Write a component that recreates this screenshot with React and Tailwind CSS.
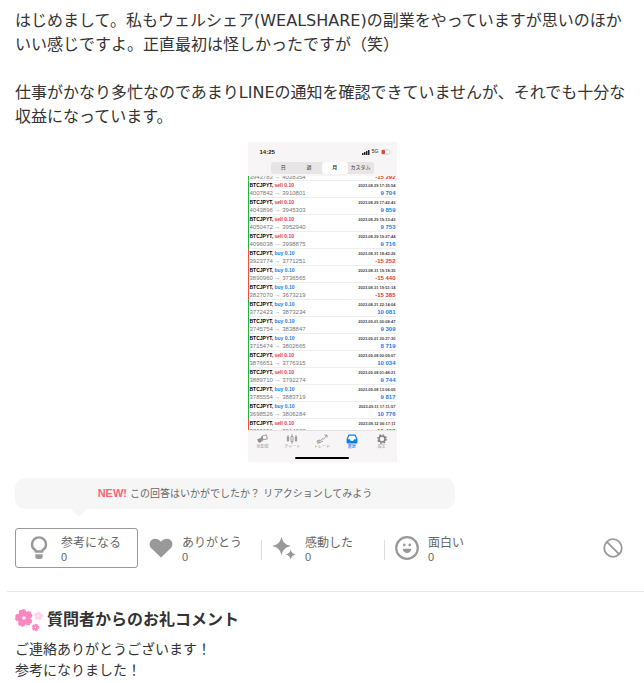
import React from 'react';
import { clsx } from 'clsx';

// Trade history shown in the attached phone screenshot
const trades = [
  { side: 'sell', from: '4007842', to: '3910801', date: '2023.08.29 17:35:54', profit: '9 704', stripe: 'green' },
  { side: 'sell', from: '4043896', to: '3945303', date: '2023.08.29 17:42:43', profit: '9 859', stripe: 'green' },
  { side: 'sell', from: '4050472', to: '3952940', date: '2023.08.29 19:13:43', profit: '9 753', stripe: 'green' },
  { side: 'sell', from: '4096038', to: '3998875', date: '2023.08.29 19:27:44', profit: '9 716', stripe: 'green' },
  { side: 'buy', from: '3923774', to: '3771251', date: '2023.08.31 18:42:26', profit: '-15 252', stripe: 'red' },
  { side: 'buy', from: '3890960', to: '3736565', date: '2023.08.31 19:18:35', profit: '-15 440', stripe: 'red' },
  { side: 'buy', from: '3827070', to: '3673219', date: '2023.08.31 19:51:14', profit: '-15 385', stripe: 'red' },
  { side: 'buy', from: '3772423', to: '3873234', date: '2023.08.31 22:14:04', profit: '10 081', stripe: 'green' },
  { side: 'buy', from: '3745754', to: '3838847', date: '2023.09.01 00:08:47', profit: '9 309', stripe: 'green' },
  { side: 'buy', from: '3715474', to: '3802665', date: '2023.09.01 20:27:30', profit: '8 719', stripe: 'green' },
  { side: 'sell', from: '3876651', to: '3776315', date: '2023.09.08 00:09:07', profit: '10 034', stripe: 'green' },
  { side: 'sell', from: '3889710', to: '3792274', date: '2023.09.08 01:48:21', profit: '9 744', stripe: 'green' },
  { side: 'buy', from: '3785554', to: '3883719', date: '2023.09.08 13:06:05', profit: '9 817', stripe: 'green' },
  { side: 'buy', from: '3698526', to: '3806284', date: '2023.09.11 17:11:57', profit: '10 776', stripe: 'green' },
  { side: 'sell', from: '3793651', to: '3914008', date: '2023.09.12 06:17:11', profit: '-15 463', stripe: 'red' },
];

const periods = ['日', '週', '月', 'カスタム'];

const BulbIcon = () => (
  <svg viewBox="0 0 24 24" className="h-6 w-6" fill="none" stroke="#999" strokeWidth="2.4" aria-hidden="true">
    <path d="M8.600 15.500v-1.300C6.300 12.900 5 11 5 8.400a7 7 0 0 1 14 0c0 2.600-1.300 4.500-3.600 5.800v1.300z" strokeLinejoin="round" />
    <path d="M8.300 18.300h7.400v2.200a2.500 2.500 0 0 1-2.500 2.500h-2.400a2.500 2.500 0 0 1-2.500-2.500z" fill="#999" stroke="none" />
  </svg>
);

const HeartIcon = () => (
  <svg viewBox="0 0 24 24" className="h-6 w-6" fill="#999" aria-hidden="true">
    <path d="M12 21.500 2.300 12.200C-.2 9.700.2 5.800 2.600 3.900 5.300 1.800 9.400 2.300 12 5.700c2.600-3.400 6.700-3.900 9.400-1.800 2.400 1.900 2.800 5.800.3 8.300z" />
  </svg>
);

const SparkleIcon = () => (
  <svg viewBox="0 0 24 24" className="h-6 w-6" fill="#999" aria-hidden="true">
    <path d="M9.500.5c1.300 5.800 3.400 7.900 9.200 9.500-5.800 1.600-7.900 3.700-9.200 9.500C8.200 13.700 6.100 11.600.3 10 6.100 8.400 8.200 6.300 9.500.5z" />
    <path d="M18.700 13.500c.7 3 1.900 4.200 5 5.100-3.100.9-4.300 2.100-5 5.100-.7-3-1.900-4.200-5-5.100 3.100-.9 4.300-2.100 5-5.100z" />
  </svg>
);

const SmileIcon = () => (
  <svg viewBox="0 0 24 24" className="h-6 w-6" fill="#999" aria-hidden="true">
    <circle cx="12" cy="12" r="10.800" fill="none" stroke="#999" strokeWidth="2.200" />
    <circle cx="9.300" cy="8.900" r="1.300" />
    <circle cx="14.700" cy="8.900" r="1.300" />
    <path d="M7.700 12.700h8.600c0 2.600-1.900 4.300-4.300 4.300s-4.300-1.700-4.300-4.300z" />
  </svg>
);

const BanIcon = () => (
  <svg viewBox="0 0 20 20" className="h-5 w-5" fill="none" stroke="#999" strokeWidth="1.800" aria-hidden="true">
    <circle cx="10" cy="10" r="8.800" />
    <path d="M3.900 3.900 16.100 16.100" />
  </svg>
);

const petalAngles = [0, 72, 144, 216, 288];

const Flower = ({ x, y, size, rotate, color }) => (
  <g transform={`translate(${x} ${y}) rotate(${rotate}) scale(${size})`}>
    {petalAngles.map((angle) => (
      <path
        key={angle}
        d="M0 0C-2.500-1.500-4.200-4-3.900-6.500-3.700-8.300-2.500-9.300-1.200-9.300L0-8.900 1.200-9.300C2.500-9.300 3.700-8.300 3.900-6.500 4.200-4 2.500-1.500 0 0z"
        transform={`rotate(${angle})`}
        fill={color}
      />
    ))}
    <circle r="4" fill={color} />
    <circle r="1.900" fill="#fff" />
  </g>
);

const FlowersIcon = () => (
  <svg viewBox="0 0 28 24" className="h-6 w-7" aria-hidden="true">
    <Flower x={9} y={10} size={0.95} rotate={-14} color="#ff85c0" />
    <Flower x={23.500} y={8} size={0.480} rotate={10} color="#ffd3ea" />
    <Flower x={20.500} y={19.500} size={0.400} rotate={15} color="#ff85c0" />
  </svg>
);

const QuotesIcon = () => (
  <svg viewBox="0 0 12 10" className="h-[10px] w-3" fill="#8c8c8c">
    <path d="M1 5.500 4.500 4l1.500 3.500L3 9z" />
    <path d="M6 2 10.500.8l.8 4.200L7 5.800z" fill="none" stroke="#8c8c8c" strokeWidth=".8" />
    <path d="M4.500 4 6 2l1 3.800-1 1.700z" />
  </svg>
);

const ChartIcon = () => (
  <svg viewBox="0 0 12 10" className="h-[10px] w-3" fill="none" stroke="#8c8c8c" strokeWidth=".8">
    <path d="M2 1v7M10 1v7M6 0v2.500M6 7.500V10" />
    <path d="M1.300 3h1.400v3.500H1.300zM9.300 3h1.400v3.500H9.300zM5 2.500h2v5H5z" />
  </svg>
);

const TradeIcon = () => (
  <svg viewBox="0 0 12 10" className="h-[10px] w-3" fill="none" stroke="#8c8c8c" strokeWidth=".8">
    <path d="M1.500 8 3 6l2 .5L6.500 4.500l1 .8L11 1M8.500 1H11v2.500" />
    <path d="M1.500 9.300 4 8.500l3-1.500" />
    <circle cx="2.300" cy="7.600" r="1.200" />
  </svg>
);

const HistoryIcon = () => (
  <svg viewBox="0 0 12 10" className="h-[10px] w-3">
    <path d="M2.500.5h7l1.900 4.500v3.300a1.200 1.200 0 0 1-1.200 1.200H1.800A1.200 1.200 0 0 1 .6 8.300V5z" fill="#0a7cf5" />
    <path d="M3.200 1.700h5.600l1.300 3.600H8L7.300 7H4.700L4 5.300H1.900z" fill="#fff" />
  </svg>
);

const SettingsIcon = () => (
  <svg viewBox="0 0 12 10" className="h-[10px] w-3" fill="none" stroke="#808080">
    <circle cx="6" cy="5" r="3" strokeWidth="1.600" />
    <circle cx="6" cy="5" r="4.300" strokeWidth="1.200" strokeDasharray="1.700 1.680" />
  </svg>
);

const phoneTabs = [
  { label: '気配値', icon: QuotesIcon },
  { label: 'チャート', icon: ChartIcon },
  { label: 'トレード', icon: TradeIcon },
  { label: '履歴', icon: HistoryIcon, active: true },
  { label: '設定', icon: SettingsIcon },
];

const reactions = [
  { label: '参考になる', icon: BulbIcon, count: 0 },
  { label: 'ありがとう', icon: HeartIcon, count: 0 },
  { label: '感動した', icon: SparkleIcon, count: 0 },
  { label: '面白い', icon: SmileIcon, count: 0 },
];

const TradeRow = ({ side, from, to, date, profit, stripe }) => (
  <li
    className={clsx(
      'h-[17px] border-l px-px',
      stripe === 'green' ? 'border-[#1fb53c]' : 'border-[#f0503c]'
    )}
  >
    <div className="border-b border-[#eeeeee]">
      <div className="flex items-center justify-between h-[9px] font-bold">
        <span className="text-[5px] text-black">
          BTCJPYT, <span className={side === 'sell' ? 'text-[#e0392b]' : 'text-[#1a80e6]'}>{side} 0.10</span>
        </span>
        <span className="text-[4px] text-[#444]">{date}</span>
      </div>
      <div className="flex items-center justify-between h-[7px] text-[6px]">
        <span className="text-[#777]">{from} → {to}</span>
        <span className={clsx('font-bold', profit.startsWith('-') ? 'text-[#e0392b]' : 'text-[#1a80e6]')}>
          {profit}
        </span>
      </div>
    </div>
  </li>
);

const PhoneScreenshot = () => (
  <figure className="w-[149px] mx-auto bg-[#f7f5f5] whitespace-nowrap font-['Liberation_Sans','Noto_Sans_CJK_JP',sans-serif]">
    {/* Status bar */}
    <div className="flex items-center justify-between h-5 pl-3 pr-1.5 text-[6px] font-bold text-[#222]">
      <span>14:25</span>
      <span className="flex items-center gap-0.5 text-[5px] font-normal">
        <svg viewBox="0 0 8 6" className="h-1.5 w-2" fill="#222">
          <path d="M0 4h1.500v2H0zM2 3h1.500v3H2zM4 2h1.500v4H4zM6 1h1.500v5H6z" />
        </svg>
        5G
        <svg viewBox="0 0 10 6" className="h-1.5 w-2.5">
          <rect x=".5" y=".8" width="8.500" height="4.400" rx="1.300" fill="#fff" stroke="#bbb" strokeWidth=".6" />
          <rect x=".7" y="1" width="3.300" height="4" rx=".8" fill="#f0403a" />
        </svg>
      </span>
    </div>

    {/* Period selector */}
    <div className="h-[14px] px-[23px]">
      <div className="grid grid-cols-4 h-3 rounded-[3px] bg-[#e7e5e6] text-[5px] text-[#333]">
        {periods.map((period) => (
          <span
            key={period}
            className={clsx('flex items-center justify-center', period === '月' && 'rounded-[3px] bg-white font-bold')}
          >
            {period}
          </span>
        ))}
      </div>
    </div>

    {/* Trade list, scrolled part way */}
    <ul className="h-[254px] overflow-hidden bg-white">
      <li className="flex items-end justify-between h-[5px] overflow-hidden border-l border-b border-l-[#1fb53c] border-b-[#eeeeee] px-px text-[6px] leading-[6px]">
        <span className="text-[#777]">3943783 → 4038354</span>
        <span className="font-bold text-[#e0392b]">-15 292</span>
      </li>
      {trades.map((trade) => (
        <TradeRow key={trade.date} {...trade} />
      ))}
    </ul>

    {/* Tab bar */}
    <div className="grid grid-cols-5 h-6 pt-[3px] border-t border-[#e2e2e2]">
      {phoneTabs.map((tab) => (
        <span
          key={tab.label}
          className={clsx('flex flex-col items-center text-[4px] leading-[6px]', tab.active ? 'text-[#0a7cf5]' : 'text-[#999]')}
        >
          <tab.icon />
          {tab.label}
        </span>
      ))}
    </div>
    <div className="h-2 pt-[3px]">
      <div className="mx-auto h-0.5 w-[54px] rounded-full bg-black" />
    </div>
  </figure>
);

const ReactionButton = ({ label, icon: Icon, count, index }) => (
  <button
    type="button"
    className={clsx(
      'flex items-center w-[123px] h-10 pl-[11px] text-left',
      index === 0 && 'rounded-[3px] border border-[#999]'
    )}
  >
    <Icon />
    <span className={clsx('flex flex-col pt-0.5 text-[#666]', index === 0 ? 'ml-2.5' : 'ml-[9px]')}>
      <span className="text-xs leading-4">{label}</span>
      <span className="font-['Liberation_Sans',sans-serif] text-[11px] leading-3">{count}</span>
    </span>
  </button>
);

const App = () => {
  return (
    <main className="bg-white text-[#333] font-['DejaVu_Sans','Noto_Sans_CJK_JP',sans-serif]">
      <div className="px-[15px] pt-[9px]">
        {/* Answer text */}
        <p className="text-base leading-6">
          はじめまして。私もウェルシェア(WEALSHARE)の副業をやっていますが思いのほかいい感じですよ。正直最初は怪しかったですが（笑）
        </p>
        <p className="mt-6 mb-[13px] text-base leading-6">
          仕事がかなり多忙なのであまりLINEの通知を確認できていませんが、それでも十分な収益になっています。
        </p>

        <PhoneScreenshot />

        {/* Reaction prompt */}
        <div className="relative mt-4 flex items-center justify-center gap-[3px] h-[31px] max-w-[440px] rounded-[10px] bg-[#f6f6f6] text-[10px] text-[#666]">
          <b className="font-['Liberation_Sans',sans-serif] text-[11px] text-[#ff6478]">NEW!</b>
          <span>この回答はいかがでしたか？ リアクションしてみよう</span>
          <span className="absolute left-14 top-full border-x-8 border-t-8 border-x-transparent border-t-[#f6f6f6]" />
        </div>

        <div className="mt-[19px] flex items-center justify-between pr-1.5">
          <div className="flex items-center">
            {reactions.map((reaction, index) => (
              <div key={reaction.label} className="flex items-center">
                {index > 1 && <span className="-mr-px mt-1 h-5 w-px bg-[#ddd]" />}
                <ReactionButton {...reaction} index={index} />
              </div>
            ))}
          </div>
          <button type="button" aria-label="リアクションしない">
            <BanIcon />
          </button>
        </div>
      </div>

      <hr className="ml-[7px] mt-[23px] border-[#e8e8e8]" />

      {/* Thank-you comment */}
      <section className="px-[15px] pt-4">
        <h2 className="flex items-center gap-1 text-base leading-6 font-bold">
          <FlowersIcon />
          質問者からのお礼コメント
        </h2>
        <p className="mt-[7px] text-sm leading-[21px]">
          ご連絡ありがとうございます！
          <br />
          参考になりました！
        </p>
      </section>
    </main>
  );
};

export default App;
